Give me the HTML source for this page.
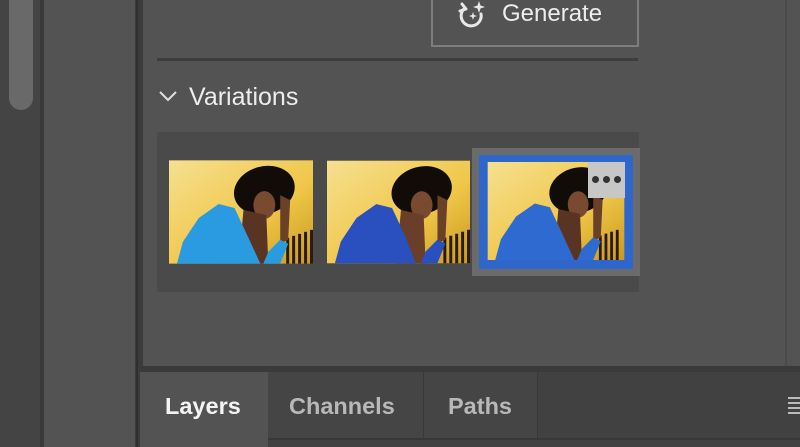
<!DOCTYPE html>
<html><head><style>
body{margin:0;width:800px;height:447px;overflow:hidden;background:#535353;font-family:"Liberation Sans",sans-serif;position:relative}
div{position:absolute;box-sizing:border-box}
svg.t{position:absolute}
</style></head><body>
<div style="left:0;top:0;width:42px;height:447px;background:#444"></div>
<div style="left:9px;top:-10px;width:24px;height:120px;background:#696969;border-radius:12px"></div>
<div style="left:40px;top:0;width:4px;height:447px;background:#3a3a3a"></div>
<div style="left:44px;top:0;width:92px;height:447px;background:#535353"></div>
<div style="left:135px;top:0;width:8px;height:447px;background:#3c3c3c"></div>
<div style="left:136px;top:0;width:2px;height:447px;background:#2f2f2f"></div>
<div style="left:785px;top:0;width:2px;height:368px;background:#4a4a4a"></div>
<div style="left:431px;top:-4px;width:208px;height:51px;border:2px solid #7d7d7d"></div>
<svg style="position:absolute;left:457px;top:0" width="34" height="32" viewBox="0 0 34 32"><path d="M8 8 A10 10 0 1 0 24 14" fill="none" stroke="#e8e8e8" stroke-width="3" stroke-linecap="round"/><path d="M5 4 L9 9 L3 11" fill="none" stroke="#e8e8e8" stroke-width="3" stroke-linecap="round" stroke-linejoin="round"/><path d="M22 1 L23.5 5.5 L28 7 L23.5 8.5 L22 13 L20.5 8.5 L16 7 L20.5 5.5Z" fill="#e8e8e8"/><path d="M16 12 L17 15 L20 16 L17 17 L16 20 L15 17 L12 16 L15 15Z" fill="#e8e8e8"/></svg>
<div style="left:502px;top:0;font-size:24px;color:#ededed;line-height:28px">Generate</div>
<div style="left:157px;top:58px;width:481px;height:3px;background:#3d3d3d"></div>
<svg style="position:absolute;left:158px;top:89px" width="22" height="14"><path d="M2 3 L10 11 L18 3" fill="none" stroke="#e0e0e0" stroke-width="2"/></svg>
<div style="left:189px;top:83px;font-size:25px;color:#ededed;line-height:28px">Variations</div>
<div style="left:157px;top:132px;width:482px;height:160px;background:#4a4a4a"></div>
<div style="left:472px;top:148px;width:168px;height:128px;background:#6b6b6b"></div>
<div style="left:479px;top:155px;width:154px;height:114px;background:#2f66cc"></div>
<svg class="t" style="left:169px;top:160px" width="144" height="104" viewBox="0 0 145 104"><defs><linearGradient id="g" x1="0" y1="0" x2="1" y2="1"><stop offset="0" stop-color="#f6e090"/><stop offset=".6" stop-color="#efc648"/><stop offset="1" stop-color="#c99a20"/></linearGradient></defs><rect width="145" height="104" fill="url(#g)"/><g fill="#2a1a10"><rect x="118" y="78" width="3" height="26"/><rect x="124" y="76" width="3" height="28"/><rect x="130" y="74" width="3" height="30"/><rect x="136" y="72" width="3" height="32"/><rect x="142" y="70" width="3" height="34"/></g><ellipse cx="96" cy="30" rx="31" ry="24" transform="rotate(-15 96 30)" fill="#120c08"/><ellipse cx="96" cy="45" rx="11" ry="14" fill="#7a4a30"/><path d="M75 50 L98 55 L100 104 L70 104Z" fill="#5a3422"/><path d="M112 35 L122 40 L120 80 L112 84Z" fill="#6a4028"/><path d="M8 104 L14 82 L30 58 L50 44 L66 48 L80 78 L92 104Z M95 104 L100 92 L112 80 L120 84 L112 104Z" fill="#2a9be0"/></svg>
<svg class="t" style="left:327px;top:160px" width="143" height="104" viewBox="0 0 145 104"><rect width="145" height="104" fill="url(#g)"/><g fill="#2a1a10"><rect x="118" y="78" width="3" height="26"/><rect x="124" y="76" width="3" height="28"/><rect x="130" y="74" width="3" height="30"/><rect x="136" y="72" width="3" height="32"/><rect x="142" y="70" width="3" height="34"/></g><ellipse cx="96" cy="30" rx="31" ry="24" transform="rotate(-15 96 30)" fill="#120c08"/><ellipse cx="96" cy="45" rx="11" ry="14" fill="#7a4a30"/><path d="M75 50 L98 55 L100 104 L70 104Z" fill="#6a3e28"/><path d="M112 35 L122 40 L120 80 L112 84Z" fill="#6a4028"/><path d="M8 104 L14 82 L30 58 L50 44 L66 48 L80 78 L90 104Z M95 104 L100 92 L112 80 L120 84 L112 104Z" fill="#2a4fbf"/></svg>
<svg class="t" style="left:487px;top:162px" width="138" height="98" viewBox="0 0 145 104"><rect width="145" height="104" fill="url(#g)"/><g fill="#2a1a10"><rect x="118" y="78" width="3" height="26"/><rect x="124" y="76" width="3" height="28"/><rect x="130" y="74" width="3" height="30"/><rect x="136" y="72" width="3" height="32"/></g><ellipse cx="96" cy="30" rx="31" ry="24" transform="rotate(-15 96 30)" fill="#120c08"/><ellipse cx="96" cy="45" rx="11" ry="14" fill="#7a4a30"/><path d="M75 50 L98 55 L100 104 L70 104Z" fill="#5a3422"/><path d="M112 35 L122 40 L120 80 L112 84Z" fill="#6a4028"/><path d="M8 104 L14 82 L30 58 L50 44 L66 48 L80 78 L92 104Z M95 104 L100 92 L112 80 L120 84 L112 104Z" fill="#2f6ad0"/></svg>
<div style="left:588px;top:162px;width:37px;height:36px;background:#c7c7c7"></div>
<div style="left:592px;top:176px;width:7px;height:7px;border-radius:50%;background:#333"></div>
<div style="left:603px;top:176px;width:7px;height:7px;border-radius:50%;background:#333"></div>
<div style="left:614px;top:176px;width:7px;height:7px;border-radius:50%;background:#333"></div>
<div style="left:140px;top:366px;width:660px;height:6px;background:#3a3a3a"></div>
<div style="left:140px;top:372px;width:660px;height:75px;background:#414141"></div>
<div style="left:140px;top:372px;width:128px;height:75px;background:#535353"></div>
<div style="left:268px;top:372px;width:156px;height:68px;background:#454545;border-right:1px solid #383838"></div>
<div style="left:424px;top:372px;width:114px;height:68px;background:#454545;border-right:1px solid #383838"></div>
<div style="left:268px;top:438px;width:532px;height:2px;background:#383838"></div>
<div style="left:165px;top:392px;font-size:23.5px;font-weight:bold;color:#f4f4f4;line-height:28px">Layers</div>
<div style="left:289px;top:392px;font-size:23.5px;font-weight:bold;color:#b8b8b8;line-height:28px">Channels</div>
<div style="left:448px;top:392px;font-size:23.5px;font-weight:bold;color:#b8b8b8;line-height:28px">Paths</div>
<div style="left:788px;top:397px;width:12px;height:2px;background:#bbb"></div>
<div style="left:788px;top:402px;width:12px;height:2px;background:#bbb"></div>
<div style="left:788px;top:407px;width:12px;height:2px;background:#bbb"></div>
<div style="left:788px;top:412px;width:12px;height:2px;background:#bbb"></div>
</body></html>
